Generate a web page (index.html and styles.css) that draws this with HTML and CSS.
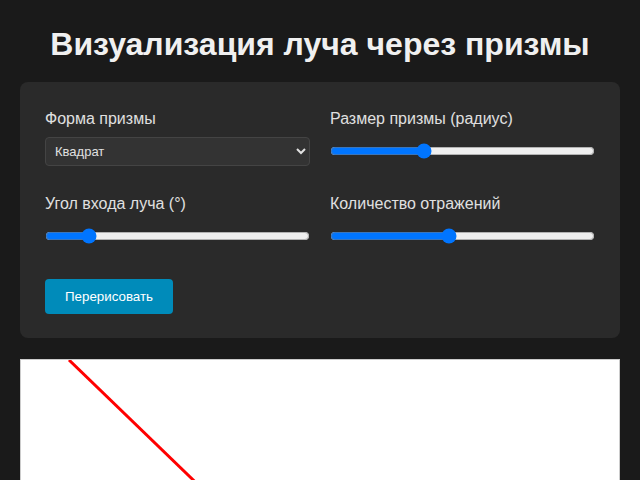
FILE: index.html
```html
<!DOCTYPE html>
<html lang="ru">
<head>
    <meta charset="utf-8">
    <title>Визуализация луча через призмы</title>
    <link rel="stylesheet" href="styles.css">
</head>
<body>
    <h1>Визуализация луча через призмы</h1>
    <div class="controls">
        <div class="control">
            <label for="shape">Форма призмы</label>
            <select id="shape">
                <option>Квадрат</option>
                <option>Треугольник</option>
                <option>Шестиугольник</option>
            </select>
        </div>
        <div class="control">
            <label for="size">Размер призмы (радиус)</label>
            <input type="range" id="size" min="50" max="200" value="102">
        </div>
        <div class="control">
            <label for="angle">Угол входа луча (°)</label>
            <input type="range" id="angle" min="10" max="80" value="20">
        </div>
        <div class="control">
            <label for="reflections">Количество отражений</label>
            <input type="range" id="reflections" min="1" max="10" value="5">
        </div>
        <div class="actions">
            <button id="redraw">Перерисовать</button>
        </div>
    </div>
    <canvas id="scene" width="598" height="400"></canvas>

    <script>
        const canvas = document.getElementById('scene');
        const ctx = canvas.getContext('2d');

        function draw() {
            ctx.clearRect(0, 0, canvas.width, canvas.height);
            ctx.strokeStyle = 'red';
            ctx.lineWidth = 3;
            ctx.beginPath();
            ctx.moveTo(48, 0);
            ctx.lineTo(48 + 400 * 1.035, 400);
            ctx.stroke();
        }

        document.getElementById('redraw').addEventListener('click', draw);
        draw();
    </script>
</body>
</html>
```

FILE: styles.css
```css
body {
    margin: 0;
    padding: 0 20px;
    background-color: #1a1a1a;
    color: #e0e0e0;
    font-family: "Liberation Sans", Arial, sans-serif;
}
h1 {
    margin: 26px 0 19px;
    font-size: 32px;
    text-align: center;
    color: #f0f0f0;
}
.controls {
    display: grid;
    grid-template-columns: 1fr 1fr;
    column-gap: 20px;
    row-gap: 29px;
    padding: 28px 25px 24px;
    background-color: #2a2a2a;
    border-radius: 8px;
}
.control label {
    display: block;
    margin-bottom: 9px;
    font-size: 16px;
}
.control select {
    display: block;
    width: 100%;
    height: 29px;
    padding: 0 5px;
    background-color: #333;
    color: #e0e0e0;
    border: 1px solid #444;
    border-radius: 4px;
    font-family: inherit;
    font-size: 13px;
}
.control input[type="range"] {
    display: block;
    width: 100%;
    height: 28px;
    margin: 0;
}
.actions {
    grid-column: 1 / 3;
}
.actions button {
    padding: 10px 20px;
    background-color: #008bba;
    color: white;
    border: none;
    border-radius: 4px;
    font-family: inherit;
    font-size: 13.33px;
    cursor: pointer;
}
canvas {
    display: block;
    margin-top: 21px;
    background-color: white;
    border: 1px solid #ccc;
}
```
